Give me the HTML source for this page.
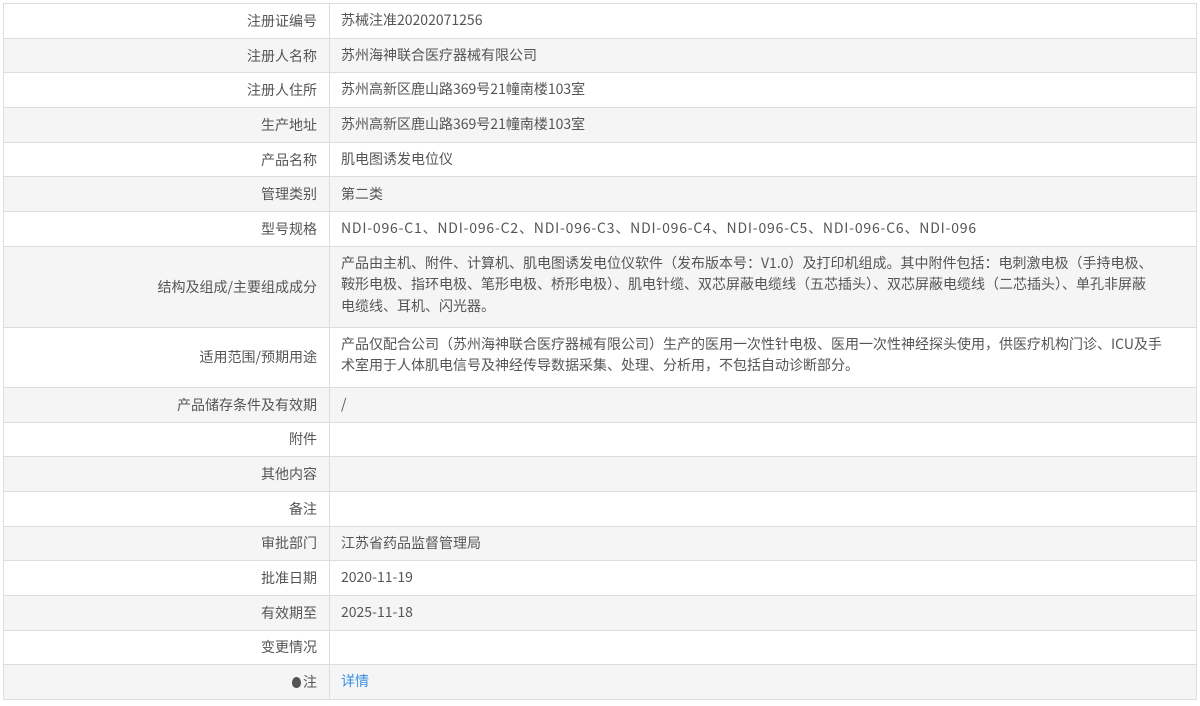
<!DOCTYPE html>
<html><head><meta charset="utf-8"><style>
body{margin:0;background:#fff;font-family:"Noto Sans CJK SC",sans-serif;font-size:14px;color:#555;}
table{position:absolute;left:3px;top:3px;width:1194px;border-collapse:collapse;table-layout:fixed;}
td{border:1px solid #ddd;padding:0;height:33.7px;vertical-align:middle;line-height:20px;}
td.l{width:313px;text-align:right;padding-right:12px;}
td.v{padding-left:11px;line-height:21.5px;}
tr:nth-child(even) td{background:#f5f5f5;}
td.m{vertical-align:top;padding-top:6px;}
a{color:#3a8ee6;text-decoration:none;}
.dot{display:inline-block;width:9px;height:11px;background:#555;border-radius:50% 50% 45% 45%;vertical-align:-1px;margin-right:2px;}
</style></head><body>
<table>
<tr><td class="l">注册证编号</td><td class="v">苏械注准20202071256</td></tr>
<tr><td class="l">注册人名称</td><td class="v">苏州海神联合医疗器械有限公司</td></tr>
<tr><td class="l">注册人住所</td><td class="v">苏州高新区鹿山路369号21幢南楼103室</td></tr>
<tr><td class="l">生产地址</td><td class="v">苏州高新区鹿山路369号21幢南楼103室</td></tr>
<tr><td class="l">产品名称</td><td class="v">肌电图诱发电位仪</td></tr>
<tr><td class="l">管理类别</td><td class="v">第二类</td></tr>
<tr><td class="l">型号规格</td><td class="v" style="letter-spacing:0.8px">NDI-096-C1、NDI-096-C2、NDI-096-C3、NDI-096-C4、NDI-096-C5、NDI-096-C6、NDI-096</td></tr>
<tr><td class="l" style="height:80px">结构及组成/主要组成成分</td><td class="v m" style="height:74px"><div style="white-space:nowrap">产品由主机、附件、计算机、肌电图诱发电位仪软件（发布版本号：V1.0）及打印机组成。其中附件包括：电刺激电极（手持电极、<br>鞍形电极、指环电极、笔形电极、桥形电极）、肌电针缆、双芯屏蔽电缆线（五芯插头）、双芯屏蔽电缆线（二芯插头）、单孔非屏蔽<br>电缆线、耳机、闪光器。</div></td></tr>
<tr><td class="l" style="height:59px">适用范围/预期用途</td><td class="v m" style="height:53px"><div style="white-space:nowrap">产品仅配合公司（苏州海神联合医疗器械有限公司）生产的医用一次性针电极、医用一次性神经探头使用，供医疗机构门诊、ICU及手<br>术室用于人体肌电信号及神经传导数据采集、处理、分析用，不包括自动诊断部分。</div></td></tr>
<tr><td class="l">产品储存条件及有效期</td><td class="v">/</td></tr>
<tr><td class="l">附件</td><td class="v"></td></tr>
<tr><td class="l">其他内容</td><td class="v"></td></tr>
<tr><td class="l">备注</td><td class="v"></td></tr>
<tr><td class="l">审批部门</td><td class="v">江苏省药品监督管理局</td></tr>
<tr><td class="l">批准日期</td><td class="v">2020-11-19</td></tr>
<tr><td class="l">有效期至</td><td class="v">2025-11-18</td></tr>
<tr><td class="l">变更情况</td><td class="v"></td></tr>
<tr><td class="l"><span class="dot"></span>注</td><td class="v"><a>详情</a></td></tr>
</table>
</body></html>
